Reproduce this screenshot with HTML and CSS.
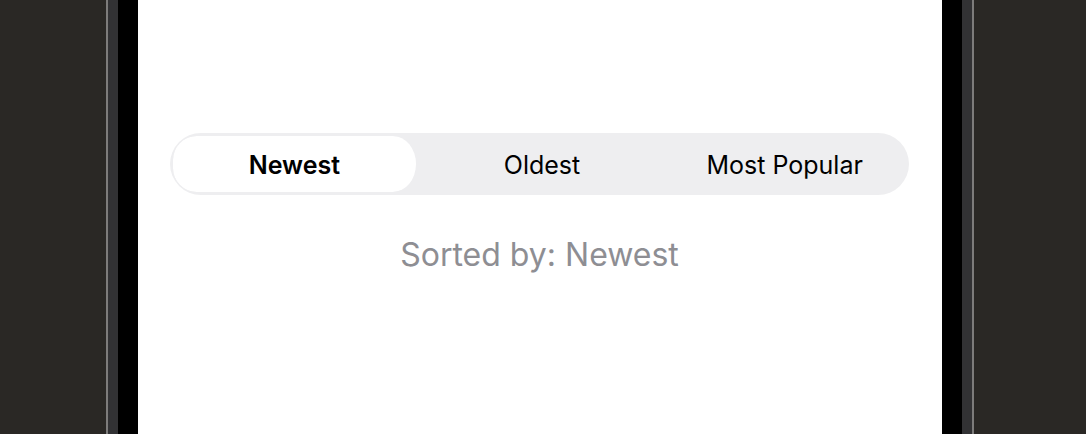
FILE: index.html
```html
<!DOCTYPE html>
<html>
<head>
<meta charset="utf-8">
<link rel="stylesheet" href="styles.css">
</head>
<body>
<div class="desk">
  <div class="side side-left"></div>
  <div class="rail"></div>
  <div class="band"></div>
  <div class="bezel"></div>
  <main class="screen">
    <div class="segmented">
      <div class="segment active">Newest</div>
      <div class="segment">Oldest</div>
      <div class="segment">Most Popular</div>
    </div>
    <p class="sorted">Sorted by: Newest</p>
  </main>
  <div class="bezel"></div>
  <div class="band"></div>
  <div class="rail"></div>
  <div class="side side-right"></div>
</div>
</body>
</html>
```

FILE: styles.css
```css
html, body {
  margin: 0;
  padding: 0;
  height: 100%;
  background: #2a2825;
}
.desk {
  display: flex;
  height: 434px;
  width: 1086px;
  overflow: hidden;
}
.side-left { width: 106px; background: #2a2825; }
.side-right { width: 112px; background: #2a2825; }
.rail { width: 2px; background: #7d7c7b; }
.band { width: 10px; background: #323234; }
.bezel { width: 20px; background: #000; }
.screen {
  width: 804px;
  background: #fff;
  box-sizing: border-box;
  padding: 133px 33px 0 32px;
  display: flex;
  flex-direction: column;
  align-items: stretch;
  font-family: Inter, "Liberation Sans", sans-serif;
}
.segmented {
  display: flex;
  height: 62px;
  box-sizing: border-box;
  padding: 3px;
  border-radius: 31px;
  background: #eeeef0;
}
.segment {
  flex: 1;
  display: flex;
  align-items: center;
  justify-content: center;
  font-size: 25px;
  color: #000;
  border-radius: 28px;
  padding-top: 2px;
  box-sizing: border-box;
}
.segment.active {
  background: #fff;
  background-clip: padding-box;
  border-right: 5px solid transparent;
  border-radius: 28px 33px 33px 28px;
  font-weight: 600;
}
.sorted {
  margin: 40px 0 0;
  text-align: center;
  font-size: 32px;
  line-height: 40px;
  color: #8e8e93;
}
```
